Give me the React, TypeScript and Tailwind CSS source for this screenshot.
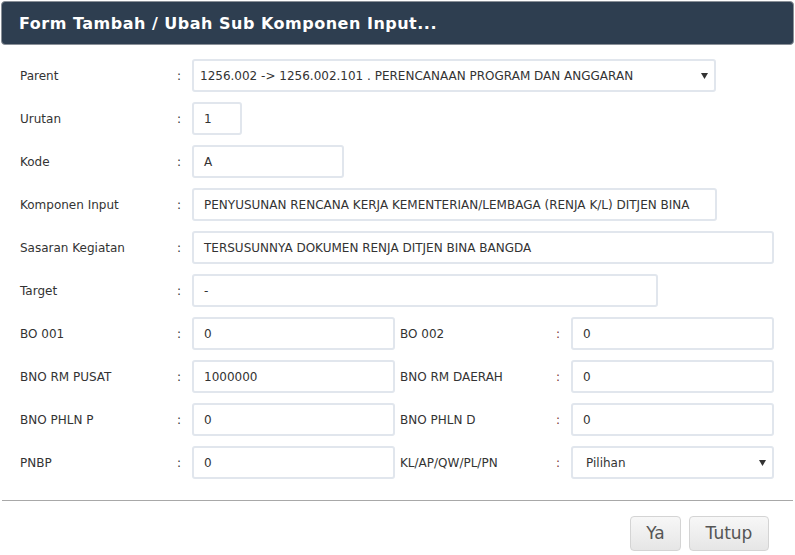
import React from "react";

const font = { fontFamily: '"DejaVu Sans", Verdana, sans-serif' };

function Arrow() {
  return (
    <svg width="7" height="6" viewBox="0 0 7 6" className="shrink-0">
      <path d="M0 0 H7 L3.5 6 Z" fill="#333" />
    </svg>
  );
}

function Field({ value, w, pl = "pl-[10px]" }: { value: string; w: string; pl?: string }) {
  return (
    <div className={`${w} h-[33px] border-2 border-[#e1e6ed] rounded-[3px] bg-white flex items-center ${pl} text-[12px] text-[#333] whitespace-nowrap overflow-hidden`}>
      {value}
    </div>
  );
}

function Select({ value, w, pl, arrowPr }: { value: string; w: string; pl: string; arrowPr: string }) {
  return (
    <div className={`${w} h-[33px] border-2 border-[#e1e6ed] rounded-[3px] bg-white flex items-center justify-between ${pl} ${arrowPr} text-[12px] text-[#333] whitespace-nowrap`}>
      <span>{value}</span>
      <Arrow />
    </div>
  );
}

function Label({ text }: { text: string }) {
  return <div className="w-[157px] shrink-0 text-[12px] text-[#333]">{text}</div>;
}

function Colon({ red }: { red?: boolean }) {
  return (
    <div className={`w-[15px] shrink-0 text-[12px] ${red ? "text-[#7a3434]" : "text-[#333]"}`}>:</div>
  );
}

function Row({ label, children }: { label: string; children: React.ReactNode }) {
  return (
    <div className="flex items-center h-[33px]">
      <Label text={label} />
      <Colon />
      {children}
    </div>
  );
}

function DoubleRow({ l1, v1, l2, v2, select }: { l1: string; v1: string; l2: string; v2: string; select?: boolean }) {
  return (
    <div className="flex items-center h-[33px]">
      <Label text={l1} />
      <Colon />
      <Field value={v1} w="w-[203px]" />
      <div className="w-[161px] shrink-0 pl-[5px] text-[12px] text-[#333]">{l2}</div>
      <Colon red />
      {select ? (
        <Select value={v2} w="w-[203px]" pl="pl-[13px]" arrowPr="pr-[6px]" />
      ) : (
        <Field value={v2} w="w-[203px]" />
      )}
    </div>
  );
}

export default function App() {
  return (
    <div className="w-[795px] h-[555px] bg-white" style={font}>
      <div className="pt-[1px] px-[1px]">
        <div className="h-[44px] bg-[#2e3e50] border border-[#8a9098] rounded-[4px] flex items-center pl-[17px] pt-[1px]">
          <span className="text-white font-bold text-[16px] tracking-[0.5px]">
            Form Tambah / Ubah Sub Komponen Input...
          </span>
        </div>
      </div>
      <div className="pl-[20px] pt-[14px] flex flex-col gap-[10px]">
        <Row label="Parent">
          <Select
            value="1256.002 -> 1256.002.101 . PERENCANAAN PROGRAM DAN ANGGARAN"
            w="w-[524px]"
            pl="pl-[6px]"
            arrowPr="pr-[6px]"
          />
        </Row>
        <Row label="Urutan">
          <Field value="1" w="w-[50px]" />
        </Row>
        <Row label="Kode">
          <Field value="A" w="w-[152px]" />
        </Row>
        <Row label="Komponen Input">
          <Field value="PENYUSUNAN RENCANA KERJA KEMENTERIAN/LEMBAGA (RENJA K/L) DITJEN BINA" w="w-[525px]" />
        </Row>
        <Row label="Sasaran Kegiatan">
          <Field value="TERSUSUNNYA DOKUMEN RENJA DITJEN BINA BANGDA" w="w-[582px]" />
        </Row>
        <Row label="Target">
          <Field value="-" w="w-[466px]" />
        </Row>
        <DoubleRow l1="BO 001" v1="0" l2="BO 002" v2="0" />
        <DoubleRow l1="BNO RM PUSAT" v1="1000000" l2="BNO RM DAERAH" v2="0" />
        <DoubleRow l1="BNO PHLN P" v1="0" l2="BNO PHLN D" v2="0" />
        <DoubleRow l1="PNBP" v1="0" l2="KL/AP/QW/PL/PN" v2="Pilihan" select />
      </div>
      <div className="mt-[21px] mx-[2px] h-px bg-[#a8a8a8]" />
      <div className="flex justify-end gap-[8px] pr-[26px] pt-[15px]">
        <button className="w-[51px] h-[35px] rounded-[4px] border border-[#d4d4d4] bg-gradient-to-b from-[#f7f7f7] to-[#e6e6e6] text-[17px] text-[#555]">
          Ya
        </button>
        <button className="w-[80px] h-[35px] rounded-[4px] border border-[#d4d4d4] bg-gradient-to-b from-[#f7f7f7] to-[#e6e6e6] text-[17px] text-[#555]">
          Tutup
        </button>
      </div>
    </div>
  );
}
